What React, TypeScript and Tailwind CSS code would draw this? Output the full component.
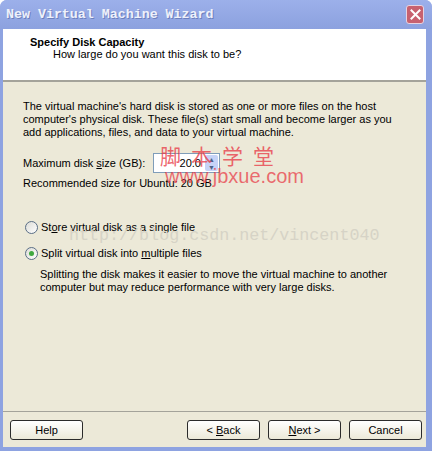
import React from 'react';

const ui = { fontFamily: '"Liberation Sans", Arial, sans-serif' };

function WizButton({ children, className = '' }: { children: React.ReactNode; className?: string }) {
  return (
    <button
      className={`h-[20px] w-[73px] rounded-[3px] border border-[#2b2b2b] bg-gradient-to-b from-white to-[#ece9d8] text-[11px] leading-none text-black ${className}`}
      style={ui}
    >
      {children}
    </button>
  );
}

function Radio({ checked }: { checked?: boolean }) {
  return (
    <span className="flex h-[13px] w-[13px] shrink-0 items-center justify-center rounded-full border border-[#5a6e86] bg-gradient-to-br from-[#dcdcd6] to-white">
      {checked && <span className="h-[5px] w-[5px] rounded-full bg-[#3fa83f]" />}
    </span>
  );
}

export default function App() {
  return (
    <div className="relative flex h-[451px] w-[432px] flex-col overflow-hidden rounded-t-[7px] bg-[#8ea3e1]">
      {/* title bar */}
      <div className="flex h-[29px] shrink-0 items-center justify-between bg-gradient-to-b from-[#9cb0ea] to-[#8ca1df] pl-[6px] pr-[8px]">
        <span
          className="text-[13.3px] font-bold text-[#eef1fb] [text-shadow:1px_1px_0_#6d80bd]"
          style={{ fontFamily: '"Liberation Mono", "Courier New", monospace' }}
        >
          New Virtual Machine Wizard
        </span>
        <span className="flex h-[19px] w-[18px] items-center justify-center rounded-[3px] border border-[#e7d3e0] bg-[#c7616f]">
          <svg width="11" height="11" viewBox="0 0 11 11">
            <path d="M1.5 1.5 L9.5 9.5 M9.5 1.5 L1.5 9.5" stroke="#fff" strokeWidth="2" strokeLinecap="square" />
          </svg>
        </span>
      </div>

      {/* client area */}
      <div className="mb-[4px] ml-[3px] mr-[6px] flex flex-1 flex-col bg-[#ece9d8] text-[11px] leading-[13px] text-black" style={ui}>
        <header className="h-[53px] shrink-0 border-b-2 border-[#a4a39a] bg-white pl-[27px] pt-[7px]">
          <p className="font-bold">Specify Disk Capacity</p>
          <p className="mt-[-1px] pl-[23px]">How large do you want this disk to be?</p>
        </header>

        <main className="relative flex-1 pl-[20px] pt-[18px]">
          <p>
            The virtual machine's hard disk is stored as one or more files on the host
            <br />
            computer's physical disk. These file(s) start small and become larger as you
            <br />
            add applications, files, and data to your virtual machine.
          </p>

          <div className="mt-[14px] flex items-center">
            <span className="w-[130px]">
              Maximum disk <u>s</u>ize (GB):
            </span>
            <div className="flex h-[20px] w-[67px] items-center border border-[#7f9db9] bg-white">
              <span className="flex-1 pr-[4px] text-right">20.0</span>
              <span className="mr-[1px] flex h-[16px] w-[13px] flex-col overflow-hidden rounded-[2px] bg-[#c6d3f7]">
                <span className="flex flex-1 items-center justify-center text-[7px] leading-none text-[#4d6185]">▲</span>
                <span className="flex flex-1 items-center justify-center text-[7px] leading-none text-[#4d6185]">▼</span>
              </span>
            </div>
          </div>

          <p className="mt-[4px]">Recommended size for Ubuntu: 20 GB</p>

          <div className="mt-[31px] flex items-center gap-[3px] pl-[2px]">
            <Radio />
            <span>
              St<u>o</u>re virtual disk as a single file
            </span>
          </div>
          <div className="mt-[13px] flex items-center gap-[3px] pl-[2px]">
            <Radio checked />
            <span>
              Split virtual disk into <u>m</u>ultiple files
            </span>
          </div>
          <p className="mt-[8px] pl-[17px]">
            Splitting the disk makes it easier to move the virtual machine to another
            <br />
            computer but may reduce performance with very large disks.
          </p>

          {/* watermarks */}
          <span
            className="absolute left-[157px] top-[63px] text-[21px] leading-none tracking-[10px] text-[#e8404a]/80"
            style={{ fontFamily: '"Noto Sans CJK SC", sans-serif' }}
          >
            脚本学堂
          </span>
          <span className="absolute left-[162px] top-[84px] text-[20px] leading-none text-[#e8404a]/75">
            www.jbxue.com
          </span>
          <span
            className="absolute left-[66px] top-[146px] text-[16.7px] leading-none text-[#d6d3c6]"
            style={{ fontFamily: '"Liberation Mono", "Courier New", monospace' }}
          >
            http://blog.csdn.net/vincent040
          </span>
        </main>

        <footer className="h-[36px] shrink-0 border-t border-[#a4a39a] pl-[7px] pt-[8px]">
          <div className="flex">
            <WizButton>Help</WizButton>
            <WizButton className="ml-[104px]">
              &lt; <u>B</u>ack
            </WizButton>
            <WizButton className="ml-[8px]">
              <u>N</u>ext &gt;
            </WizButton>
            <WizButton className="ml-[8px]">Cancel</WizButton>
          </div>
        </footer>
      </div>
    </div>
  );
}
